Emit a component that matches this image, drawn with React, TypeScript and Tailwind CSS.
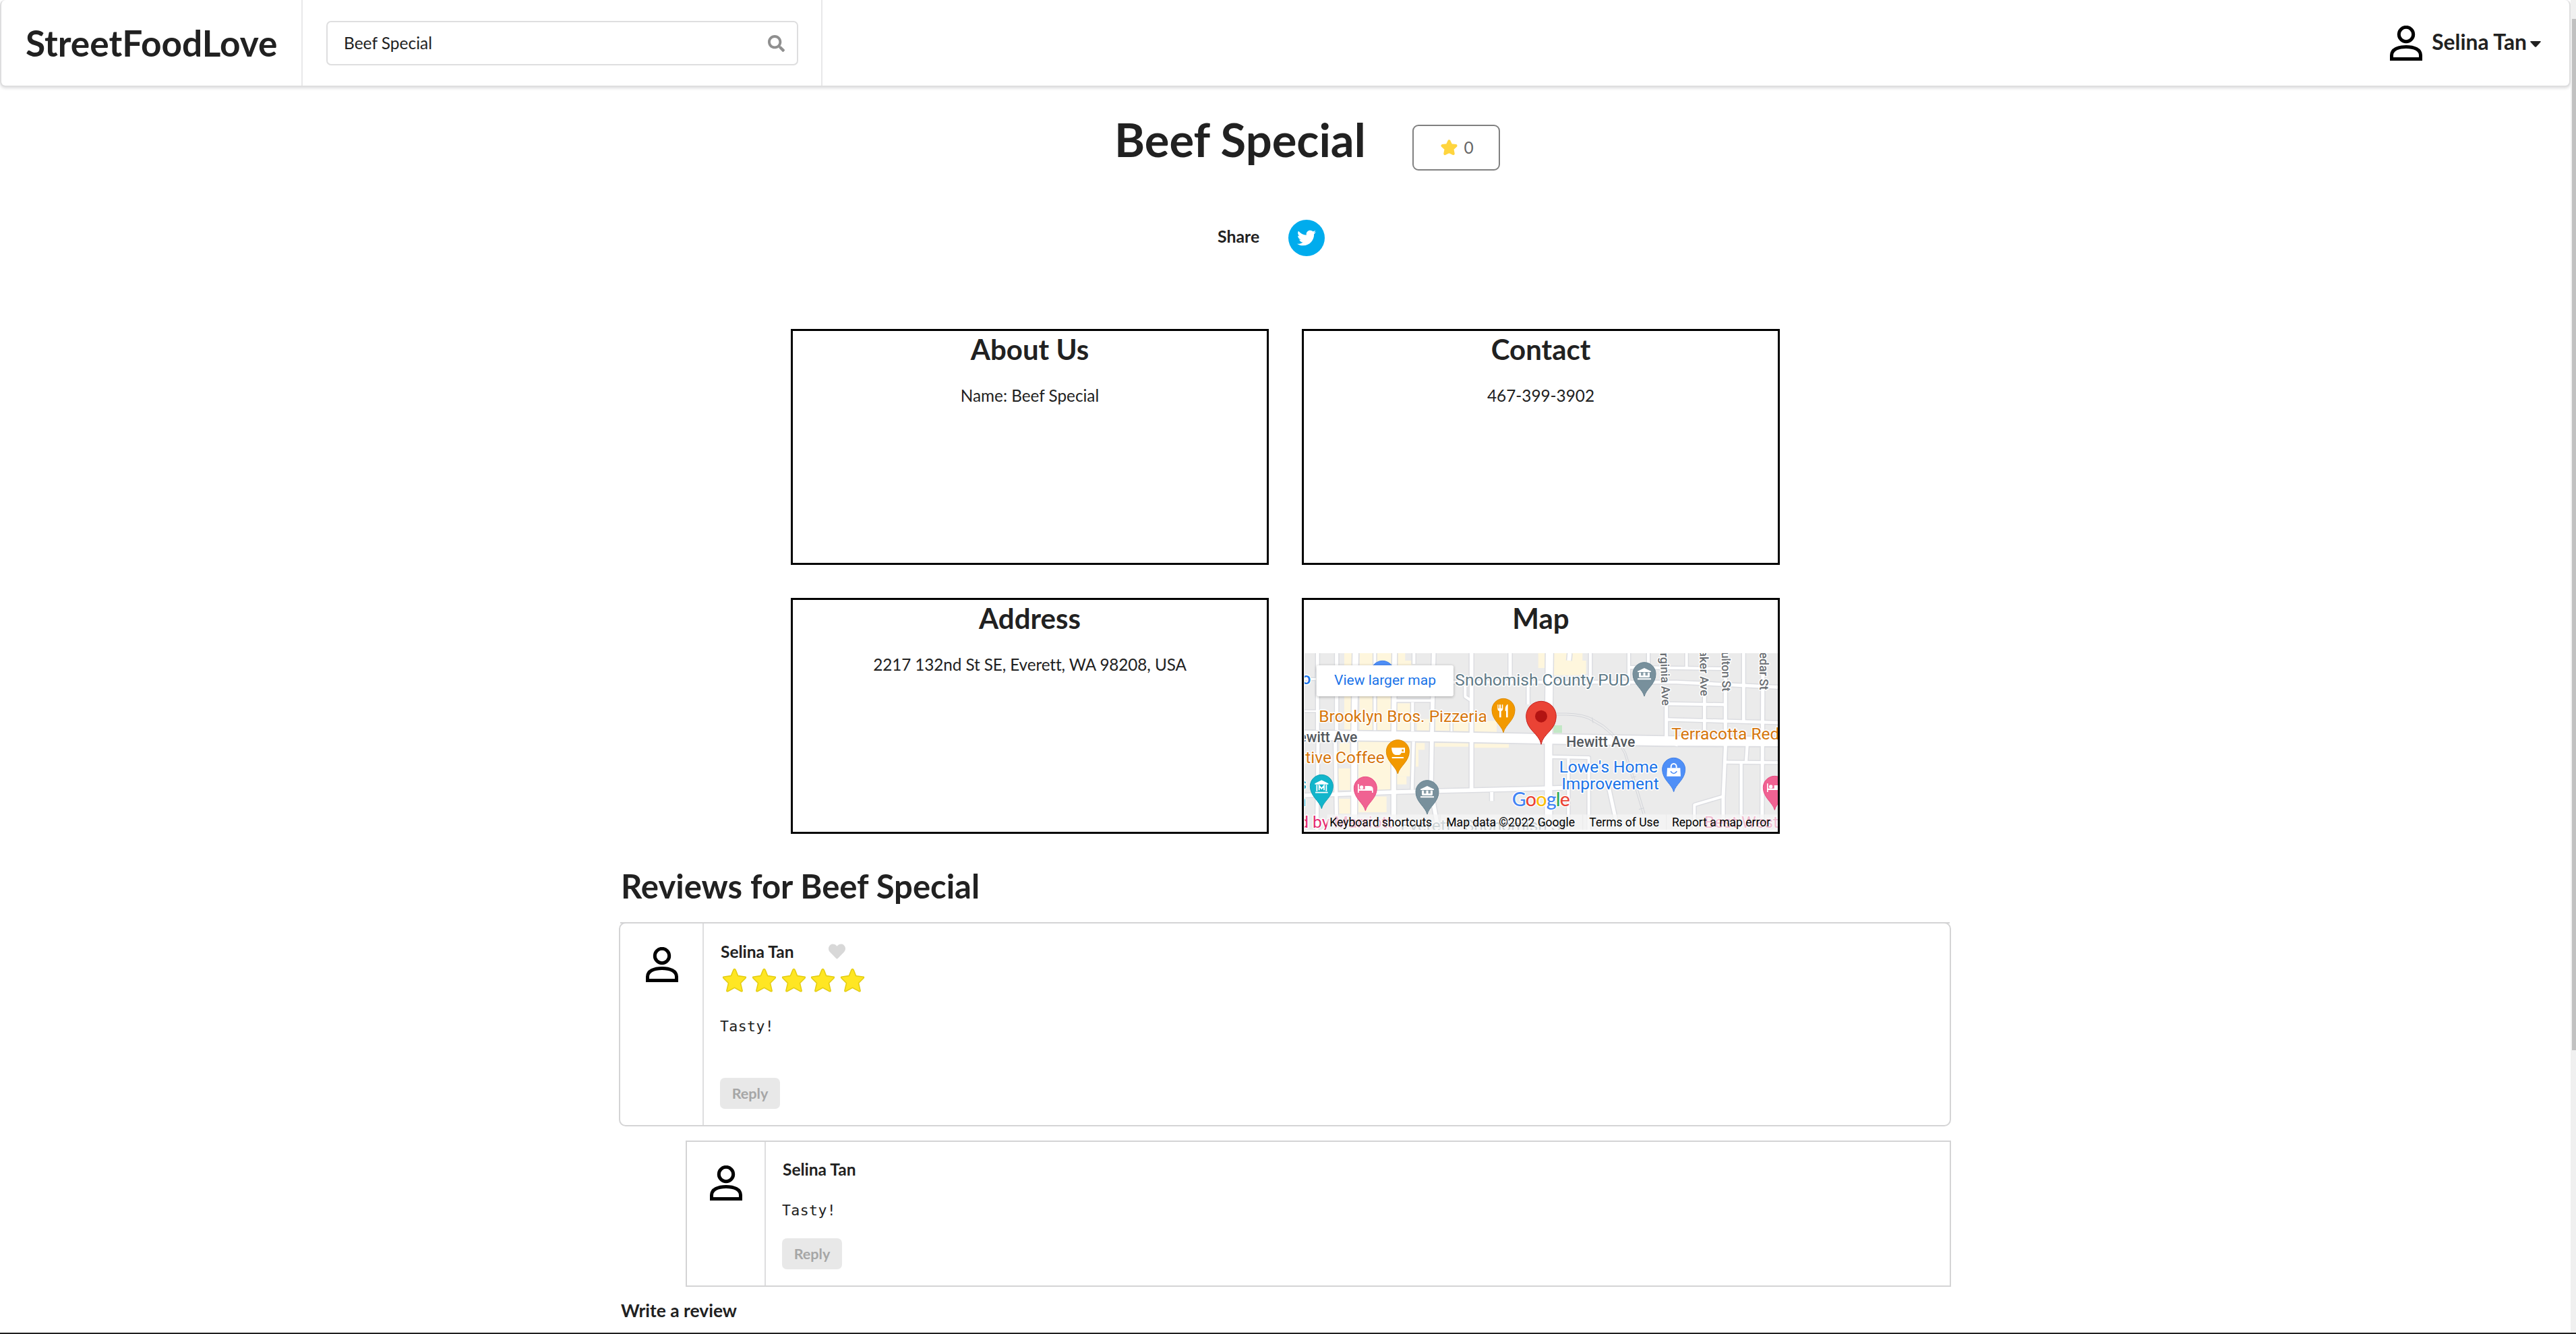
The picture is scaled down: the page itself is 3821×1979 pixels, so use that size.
import React from "react";
import { FaTwitter, FaSearch, FaHeart } from "react-icons/fa";

function Avatar() {
  return (
    <svg viewBox="0 0 48 52" className="h-[52px] w-[48px] shrink-0" fill="none" stroke="#000" strokeWidth="5">
      <circle cx="24" cy="13" r="10.7" />
      <path d="M2.5 49.5V44C2.5 35.5 12 31.4 24 31.4S45.5 35.5 45.5 44V49.5Z" />
    </svg>
  );
}

function Navbar() {
  return (
    <header className="flex h-[129px] shrink-0 rounded-[8px] border-2 border-t-0 border-[#dededf] bg-white shadow-[0_2px_4px_0_rgba(34,36,38,0.15)]">
      <div className="flex w-[447px] items-center border-r-2 border-[#e8e8e9] pl-[36px] text-[53.2px] leading-none font-bold">
        StreetFoodLove
      </div>
      <div className="flex w-[771px] items-center border-r-2 border-[#e8e8e9] pl-[35px]">
        <div className="mt-[1px] flex h-[66px] w-[700px] items-center justify-between rounded-[7px] border-2 border-[#dededf] pr-[18px] pl-[24px] text-[24.5px]">
          <span>Beef Special</span>
          <FaSearch className="size-[25px] text-[#8f8f8f]" />
        </div>
      </div>
      <div className="ml-auto flex items-center pr-[42px]">
        <Avatar />
        <span className="ml-[14px] pb-[1px] text-[31.8px] leading-none font-bold">Selina Tan</span>
        <svg viewBox="0 0 16 9" className="mt-[4px] ml-[5px] h-[9px] w-[16px]">
          <path d="M1 0H15Q16.4 .4 15.4 1.6L9 8.4Q8 9.3 7 8.4L.6 1.6Q-.4 .4 1 0Z" fill="#212121" />
        </svg>
      </div>
    </header>
  );
}

function InfoBox({ title, children }: { title: string; children: React.ReactNode }) {
  return (
    <section className="flex h-[350px] flex-col overflow-hidden border-[3px] border-black text-center">
      <h2 className="text-[42px] leading-[54px] font-bold">{title}</h2>
      {children}
    </section>
  );
}

function Pin({ x, y, fill, edge, children }: { x: number; y: number; fill: string; edge: string; children?: React.ReactNode }) {
  return (
    <g transform={`translate(${x} ${y})`}>
      <path d="M0 100C-8 66-51 46-51 0A51 51 0 1 1 51 0C51 46 8 66 0 100Z" fill={fill} stroke={edge} strokeWidth="3" />
      {children}
    </g>
  );
}

function Bank() {
  return (
    <g fill="#fff">
      <path d="M0-26L30-12V-8H-30V-12Z" />
      <path d="M-24-6H-8V14H-24ZM-8-6H8V14H-8ZM8-6H24V14H8Z" fillOpacity=".15" />
      <path d="M-24-6h9v20h-9zM-4.500-6h9v20h-9zM15-6h9v20h-9zM-22 8h44v8h-44zM-30 20h60v6h-60z" />
    </g>
  );
}

function Bed() {
  return (
    <g fill="#fff">
      <path d="M-34-18h5v22h27v-14h18q18 0 18 14v16h-5v-9h-58v9h-5z" />
      <circle cx="-17" cy="-4" r="8" />
    </g>
  );
}

const yellow: [number, number, number, number][] = [
  [222, 297, 36, 340], [290, 297, 62, 345], [366, 297, 66, 345], [457, 297, 36, 90], [480, 330, 40, 50], [457, 520, 64, 120],
  [545, 590, 58, 52], [628, 580, 68, 62], [706, 590, 70, 55], [800, 598, 100, 50], [285, 690, 148, 218], [455, 695, 60, 150],
  [455, 845, 44, 36], [200, 697, 46, 76], [195, 810, 56, 96], [285, 935, 125, 70], [195, 945, 60, 66], [625, 697, 150, 16],
  [800, 700, 154, 18], [540, 697, 40, 30], [540, 697, 12, 105], [1085, 297, 33, 66], [1155, 297, 127, 98], [1155, 330, 143, 60],
];

const roads: [string, number][] = [
  ["M103 297V640M105 690L100 1083", 14],
  ["M188 297V640M182 690L188 1083", 15],
  ["M272 297L266 660V1083", 26],
  ["M358 297V640", 12],
  ["M446 297L442 660V1083", 21],
  ["M532 297V345M526 515V645M530 690L524 905", 13],
  ["M620 297L612 660L608 905L640 1083", 17],
  ["M788 297V905", 17],
  ["M699 580V645", 9],
  ["M960 297V440", 15],
  ["M1040 440V525", 13],
  ["M760 440V490L782 505", 12],
  ["M878 915V955", 15],
  ["M1135 297L1131 680V1083", 33],
  ["M1225 297L1222 330", 18],
  ["M1317 297V440", 13],
  ["M1488 297V440M1575 297V350M1745 297V360", 12],
  ["M1655 450V680", 15],
  ["M1825 440V650", 14],
  ["M1918 297V720L1908 940V1083", 15],
  ["M1999 297V600", 14],
  ["M2085 297L2081 1083", 15],
  ["M620 412L700 426H1700L2151 448", 14],
  ["M1488 360L1918 366", 12],
  ["M1655 522L1918 526M1655 592L2151 606", 13],
  ["M1918 782L2151 784", 13],
  ["M2015 705L2010 780M1988 785V1083", 13],
  ["M446 508H612", 11],
  ["M45 412H110M45 555H110", 8],
  ["M45 930L450 915L1130 898L1200 896", 17],
  ["M1140 758L1310 762V1083M1219 762V1083", 12],
  ["M1400 900L1440 1083", 15],
  ["M1908 934L1780 972V1083", 12],
];

const hewitt = "M30 662L600 668L1100 678L1650 688L2160 690";

function StreetMap() {
  const halo = { paintOrder: "stroke", stroke: "#ffffff", strokeWidth: 9, strokeLinejoin: "round" } as const;
  return (
    <svg viewBox="45 297 2106 786" className="h-[262px] w-[702px]" fontFamily="Roboto, sans-serif">
      <rect x="45" y="297" width="2106" height="786" fill="#ebebeb" />
      {yellow.map(([x, y, w, h], i) => (
        <rect key={i} x={x} y={y} width={w} height={h} fill="#fef6dd" />
      ))}
      <rect x="1153" y="618" width="38" height="34" fill="#c3e8c6" />
      <g fill="none" stroke="#dcdde1">
        {roads.map(([d, w], i) => (
          <path key={i} d={d} strokeWidth={w + 9} strokeLinejoin="round" />
        ))}
        <path d={hewitt} strokeWidth="53" />
      </g>
      <g fill="none" stroke="#ffffff">
        {roads.map(([d, w], i) => (
          <path key={i} d={d} strokeWidth={w} strokeLinejoin="round" />
        ))}
        <path d={hewitt} strokeWidth="42" />
        <path d="M1640 688L1700 672V706Z" fill="#fff" strokeWidth="10" />
      </g>
      <g fill="none" stroke="#d3d5da" strokeWidth="3">
        <path d="M1165 564H1210Q1290 566 1330 590Q1430 640 1475 740Q1520 870 1560 1010" />
        <path d="M1165 573H1210Q1290 575 1325 599Q1420 645 1467 742Q1510 872 1551 1013" />
        <path d="M1325 583L1329 608M1500 850L1520 846M1533 992L1556 986" />
      </g>

      <circle cx="392" cy="382" r="51" fill="#4f8ff7" stroke="#3f7fe8" strokeWidth="3" />

      <g style={halo} fontSize="73.5">
        <g fill="#1a73e8">
          <text x="73" y="435" textAnchor="end" fontWeight="500">o</text>
          <text x="94" y="435">I</text>
          <text x="1178" y="829">Lowe&#39;s Home</text>
          <text x="1622" y="903" textAnchor="end">Improvement</text>
        </g>
        <text x="715" y="440" fill="#5f7a87">Snohomish County PUD</text>
        <g fill="#d6760c">
          <text x="109" y="603">Brooklyn Bros. Pizzeria</text>
          <text x="401" y="786" textAnchor="end">Native Coffee</text>
          <text x="1678" y="680">Terracotta Red</text>
        </g>
        <g fill="#0f8a94">
          <text x="54" y="904" textAnchor="end">s</text>
          <text x="52" y="977" textAnchor="end">n</text>
        </g>
        <g fill="#e5296f">
          <text x="437" y="1075" textAnchor="end">Bed by Marriott</text>
          <text x="1824" y="1073">Best Western</text>
        </g>
        <text x="472" y="1088" fill="#5f7a87">Everett - Snohomish St</text>
      </g>
      <g style={halo} fill="#54595e" fontWeight="500" fontSize="63.5">
        <text x="280" y="692" textAnchor="end">Hewitt Ave</text>
        <text x="1210" y="713">Hewitt Ave</text>
      </g>
      <g style={halo} fill="#6b6f74" fontWeight="500" fontSize="53" textAnchor="end">
        <text transform="translate(1636 531) rotate(88)">Virginia Ave</text>
        <text transform="translate(1807 488) rotate(89)">Baker Ave</text>
        <text transform="translate(1904 468) rotate(89)" textLength="205">Fulton St</text>
        <text transform="translate(2070 461) rotate(90)">Cedar St</text>
      </g>

      <Pin x={930} y={550} fill="#f29900" edge="#dd8a00">
        <path d="M-26-24v18q0 10 8 11v28h8V5q8-1 8-11v-18h-5v16h-5v-16h-6v16h-4v-16zM20-26q-12 4-12 24v6h4v29h8z" fill="#fff" />
      </Pin>
      <Pin x={460} y={734} fill="#f29900" edge="#dd8a00">
        <path d="M-28-16H32V6H16Q12 16 2 16H-10Q-26 14-28-16ZM18-9V0H26V-9Z" fill="#fff" fillRule="evenodd" />
        <rect x="-26" y="25" width="52" height="6" fill="#fff" />
      </Pin>
      <Pin x={121} y={889} fill="#12b5cb" edge="#0da0b4">
        <path d="M0-27L30-12V-8H-30V-12Z" fill="#fff" />
        <path d="M-21-6V22M21-6V22M-28 28H28M-11 18V-3L0 11L11-3V18" fill="none" stroke="#fff" strokeWidth="5.500" />
      </Pin>
      <Pin x={316} y={898} fill="#f06292" edge="#e84c82">
        <Bed />
      </Pin>
      <Pin x={591} y={914} fill="#78909c" edge="#668391">
        <Bank />
      </Pin>
      <Pin x={1557} y={389} fill="#78909c" edge="#668391">
        <Bank />
      </Pin>
      <Pin x={1688} y={814} fill="#4f8ff7" edge="#3f7fe8">
        <path d="M-29-6H29L31 31H-31Z" fill="#fff" />
        <path d="M-12-6V-12A12 13 0 0 1 12-12V-6" fill="none" stroke="#fff" strokeWidth="6" />
        <path d="M-14 9Q0 28 14 9" fill="none" stroke="#4f8ff7" strokeWidth="5" />
      </Pin>
      <Pin x={2137} y={895} fill="#f06292" edge="#e84c82">
        <Bed />
      </Pin>
      <g transform="translate(1098 578)">
        <path d="M0 125C-8 76-67 62-67 0A67 67 0 1 1 67 0C67 62 8 76 0 125Z" fill="#ea4335" stroke="#c5221f" strokeWidth="3" />
        <circle r="27" fill="#b31412" />
      </g>

      <text x="968" y="977" fontFamily="Lato" fontWeight="500" fontSize="86" textLength="259" style={{ ...halo, strokeWidth: 8 }}>
        <tspan fill="#4285f4">G</tspan>
        <tspan fill="#ea4335">o</tspan>
        <tspan fill="#fbbc04">o</tspan>
        <tspan fill="#4285f4">g</tspan>
        <tspan fill="#34a853">l</tspan>
        <tspan fill="#ea4335">e</tspan>
      </text>

      <rect x="146" y="1015" width="2005" height="68" fill="#f5f5f5" fillOpacity=".72" />
      <path d="M648 1015V1083M1283 1015V1083M1655 1015V1083" stroke="#e6e6e6" strokeWidth="2" />
      <g fill="#000" fontSize="52.5">
        <text x="157" y="1068">Keyboard shortcuts</text>
        <text x="676" y="1068">Map data ©2022 Google</text>
        <text x="1312" y="1068">Terms of Use</text>
        <text x="1680" y="1068">Report a map error</text>
      </g>
    </svg>
  );
}

function Stars() {
  return (
    <div className="mt-[8px] flex h-[36px] gap-[6.8px] pl-[3px]">
      {[0, 1, 2, 3, 4].map((i) => (
        <svg key={i} viewBox="0 0 37 36" className="h-[36px] w-[37px]">
          <path
            d="M18.500 1.500Q19.600 1.500 20.200 3L23.600 11.600L35 13.200Q35.800 13.800 35.200 14.700L27.500 22.400L30.200 34Q29.800 35.200 28.500 34.700L18.500 29.300L8.500 34.700Q7.200 35.200 6.800 34L9.500 22.400L1.800 14.700Q1.200 13.800 2 13.200L13.400 11.600L16.800 3Q17.400 1.500 18.500 1.500Z"
            fill="#ffe623"
            stroke="#e3cd12"
            strokeWidth="1.500"
          />
        </svg>
      ))}
    </div>
  );
}

function ReplyButton() {
  return (
    <button className="flex h-[46px] w-[89px] items-center justify-center rounded-[7px] bg-[#e8e8e8] pt-[1px] text-[21.600px] font-bold text-[#a6a6a6]">
      Reply
    </button>
  );
}

export default function App() {
  return (
    <div className="flex h-[1979px] w-[3821px] flex-col overflow-hidden bg-white font-[Lato,sans-serif] text-[24.500px] text-[#212121]">
      <div className="flex h-[1977px]">
        <div className="flex w-[3813px] flex-col">
          <Navbar />

          <div className="mt-[38px] ml-[1653px] flex h-[90px] items-start">
            <h1 className="w-[442px] text-[68.700px] leading-[80px] font-bold">Beef Special</h1>
            <button className="mt-[18px] flex h-[68px] w-[130px] items-center justify-center gap-[9px] rounded-[9px] border-2 border-[#808080] pl-[3px] text-[24.500px] text-[#666]">
              <svg viewBox="0 0 25 24" className="h-[24px] w-[25px]">
                <path
                  d="M12.500 2.500L15.300 8.300L22.400 9.200L17.300 14.100L18.600 21L12.500 17.800L6.400 21L7.700 14.100L2.600 9.200L9.700 8.300Z"
                  fill="#ffd53e"
                  stroke="#ffd53e"
                  strokeWidth="4.200"
                  strokeLinejoin="round"
                />
              </svg>
              <span>0</span>
            </button>
          </div>

          <div className="mt-[69px] ml-[1806px] flex h-[54px] items-center">
            <span className="w-[105px] pb-[4px] text-[24.800px] leading-none font-bold">Share</span>
            <span className="flex size-[54px] items-center justify-center rounded-full bg-[#00aced]">
              <FaTwitter className="size-[28px] text-white" />
            </span>
          </div>

          <div className="mt-[108px] ml-[1173px] grid w-[1467px] grid-cols-2 gap-[49px]">
            <InfoBox title="About Us">
              <p className="mt-[24px] text-[24.300px] leading-[35px]">Name: Beef Special</p>
            </InfoBox>
            <InfoBox title="Contact">
              <p className="mt-[24px] text-[24.300px] leading-[35px]">467-399-3902</p>
            </InfoBox>
            <InfoBox title="Address">
              <p className="mt-[24px] text-[24.300px] leading-[35px] tracking-[-0.1px]">2217 132nd St SE, Everett, WA 98208, USA</p>
            </InfoBox>
            <InfoBox title="Map">
              <div className="mt-[25px] ml-[1px] grid">
                <div className="col-start-1 row-start-1">
                  <StreetMap />
                </div>
                <a className="z-10 col-start-1 row-start-1 mt-[18px] ml-[18px] flex h-[46px] w-[203px] items-center justify-center rounded-[3px] bg-white font-[Roboto] text-[21px] text-[#1a73e8] shadow-[0_1px_4px_rgba(0,0,0,0.3)]">
                  View larger map
                </a>
              </div>
            </InfoBox>
          </div>

          <main className="ml-[918px] flex w-[1976px] flex-col">
            <h2 className="mt-[47px] pl-[3px] text-[49px] leading-[60px] font-bold">Reviews for Beef Special</h2>

            <div className="mx-[2px] mt-[24px] h-[2px] bg-[#d4d4d5]" />
            <article className="-mt-[2px] flex h-[303px] rounded-[10px] border-2 border-[#d4d4d5]">
              <div className="w-[124px] border-r-2 border-[#dededf] pt-[35px] pl-[38px]">
                <Avatar />
              </div>
              <div className="pt-[25px] pl-[24px]">
                <div className="flex items-center">
                  <span className="w-[161px] pl-[1px] leading-[34px] font-bold">Selina Tan</span>
                  <FaHeart className="-mt-[2px] size-[25px] text-[#d8d8d8]" />
                </div>
                <div className="-mt-[1px]">
                  <Stars />
                </div>
                <p className="mt-[34px] mb-[59px] font-[DejaVu_Sans_Mono,monospace] text-[21.500px] leading-[34px] tracking-[0.4px]">Tasty!</p>
                <ReplyButton />
              </div>
            </article>

            <article className="mt-[21px] ml-[99px] flex h-[217px] border-2 border-[#d4d4d5]">
              <div className="w-[117px] border-r-2 border-[#dededf] pt-[35px] pl-[34px]">
                <Avatar />
              </div>
              <div className="pt-[24px] pl-[24px]">
                <p className="pl-[1px] leading-[34px] font-bold">Selina Tan</p>
                <p className="mt-[27px] mb-[24px] font-[DejaVu_Sans_Mono,monospace] text-[21.500px] leading-[34px] tracking-[0.4px]">Tasty!</p>
                <ReplyButton />
              </div>
            </article>

            <h3 className="mt-[18px] pl-[3px] text-[26.400px] leading-[34px] font-bold">Write a review</h3>
          </main>
        </div>

        <div className="w-[8px] bg-[#f0f0f0] pt-[28px] pl-[2px]">
          <div className="h-[1530px] bg-[#c1c1c1]" />
        </div>
      </div>
      <div className="h-[2px] bg-[#202020]" />
    </div>
  );
}
